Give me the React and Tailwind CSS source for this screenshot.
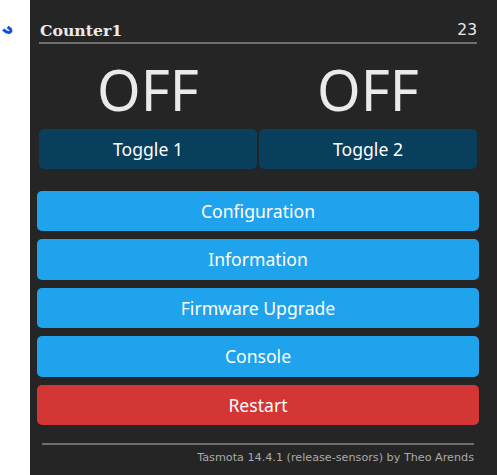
function Btn({ label, red }) {
  return (
    <button className={`block w-full h-[40.4px] rounded-[5px] text-[17.6px] text-white text-center leading-[41px] ${red ? "bg-[#d43535]" : "bg-[#1fa3ec]"}`}>
      {label}
    </button>
  );
}

export default function App() {
  return (
    <div className="w-[497px] h-[475px] overflow-hidden flex bg-white font-['Noto_Sans',sans-serif]">
      <div className="w-[30px] relative shrink-0">
        <svg className="absolute left-0 top-[22px]" width="16" height="16" viewBox="0 0 16 16" fill="none">
          <path d="M3.2 7.6 C5 9.6 7 10.6 9 10.4 C11 10.2 11.4 8.4 10.4 7 L7.6 5" stroke="#0f4fe0" strokeWidth="3" />
        </svg>
      </div>
      <div className="flex-1 bg-[#252525] pl-[7px] pr-[18px] text-[#eaeaea]">
        <div className="mx-[2px] mt-[20px] h-[24px] flex justify-between items-center border-b-2 border-[#6f6f6f]">
          <span className="ml-[1px] text-[15.7px] font-bold" style={{ fontFamily: '"DejaVu Serif", serif' }}>Counter1</span>
          <span className="text-[15.5px]" style={{ fontFamily: '"DejaVu Sans", sans-serif' }}>23</span>
        </div>
        <div className="mx-[2px] grid grid-cols-2 gap-[2px] mt-[6px] h-[79px]">
          <div className="text-[56px] leading-[79px] text-center">OFF</div>
          <div className="text-[56px] leading-[79px] text-center">OFF</div>
        </div>
        <div className="mx-[2px] grid grid-cols-2 gap-[2px]">
          <button className="h-[40px] rounded-[5px] bg-[#083f5c] text-[17.6px] text-white leading-[40px]">Toggle 1</button>
          <button className="h-[40px] rounded-[5px] bg-[#083f5c] text-[17.6px] text-white leading-[40px]">Toggle 2</button>
        </div>
        <div className="mt-[22px] flex flex-col gap-[8px]">
          <Btn label="Configuration" />
          <Btn label="Information" />
          <Btn label="Firmware Upgrade" />
          <Btn label="Console" />
          <Btn label="Restart" red />
        </div>
        <div className="mx-[5px] mt-[18px] border-t-2 border-[#6f6f6f] pt-[5px] text-right text-[11.2px] text-[#aaaaaa]" style={{ fontFamily: '"DejaVu Sans", sans-serif' }}>
          Tasmota 14.4.1 (release-sensors) by Theo Arends
        </div>
      </div>
    </div>
  );
}
